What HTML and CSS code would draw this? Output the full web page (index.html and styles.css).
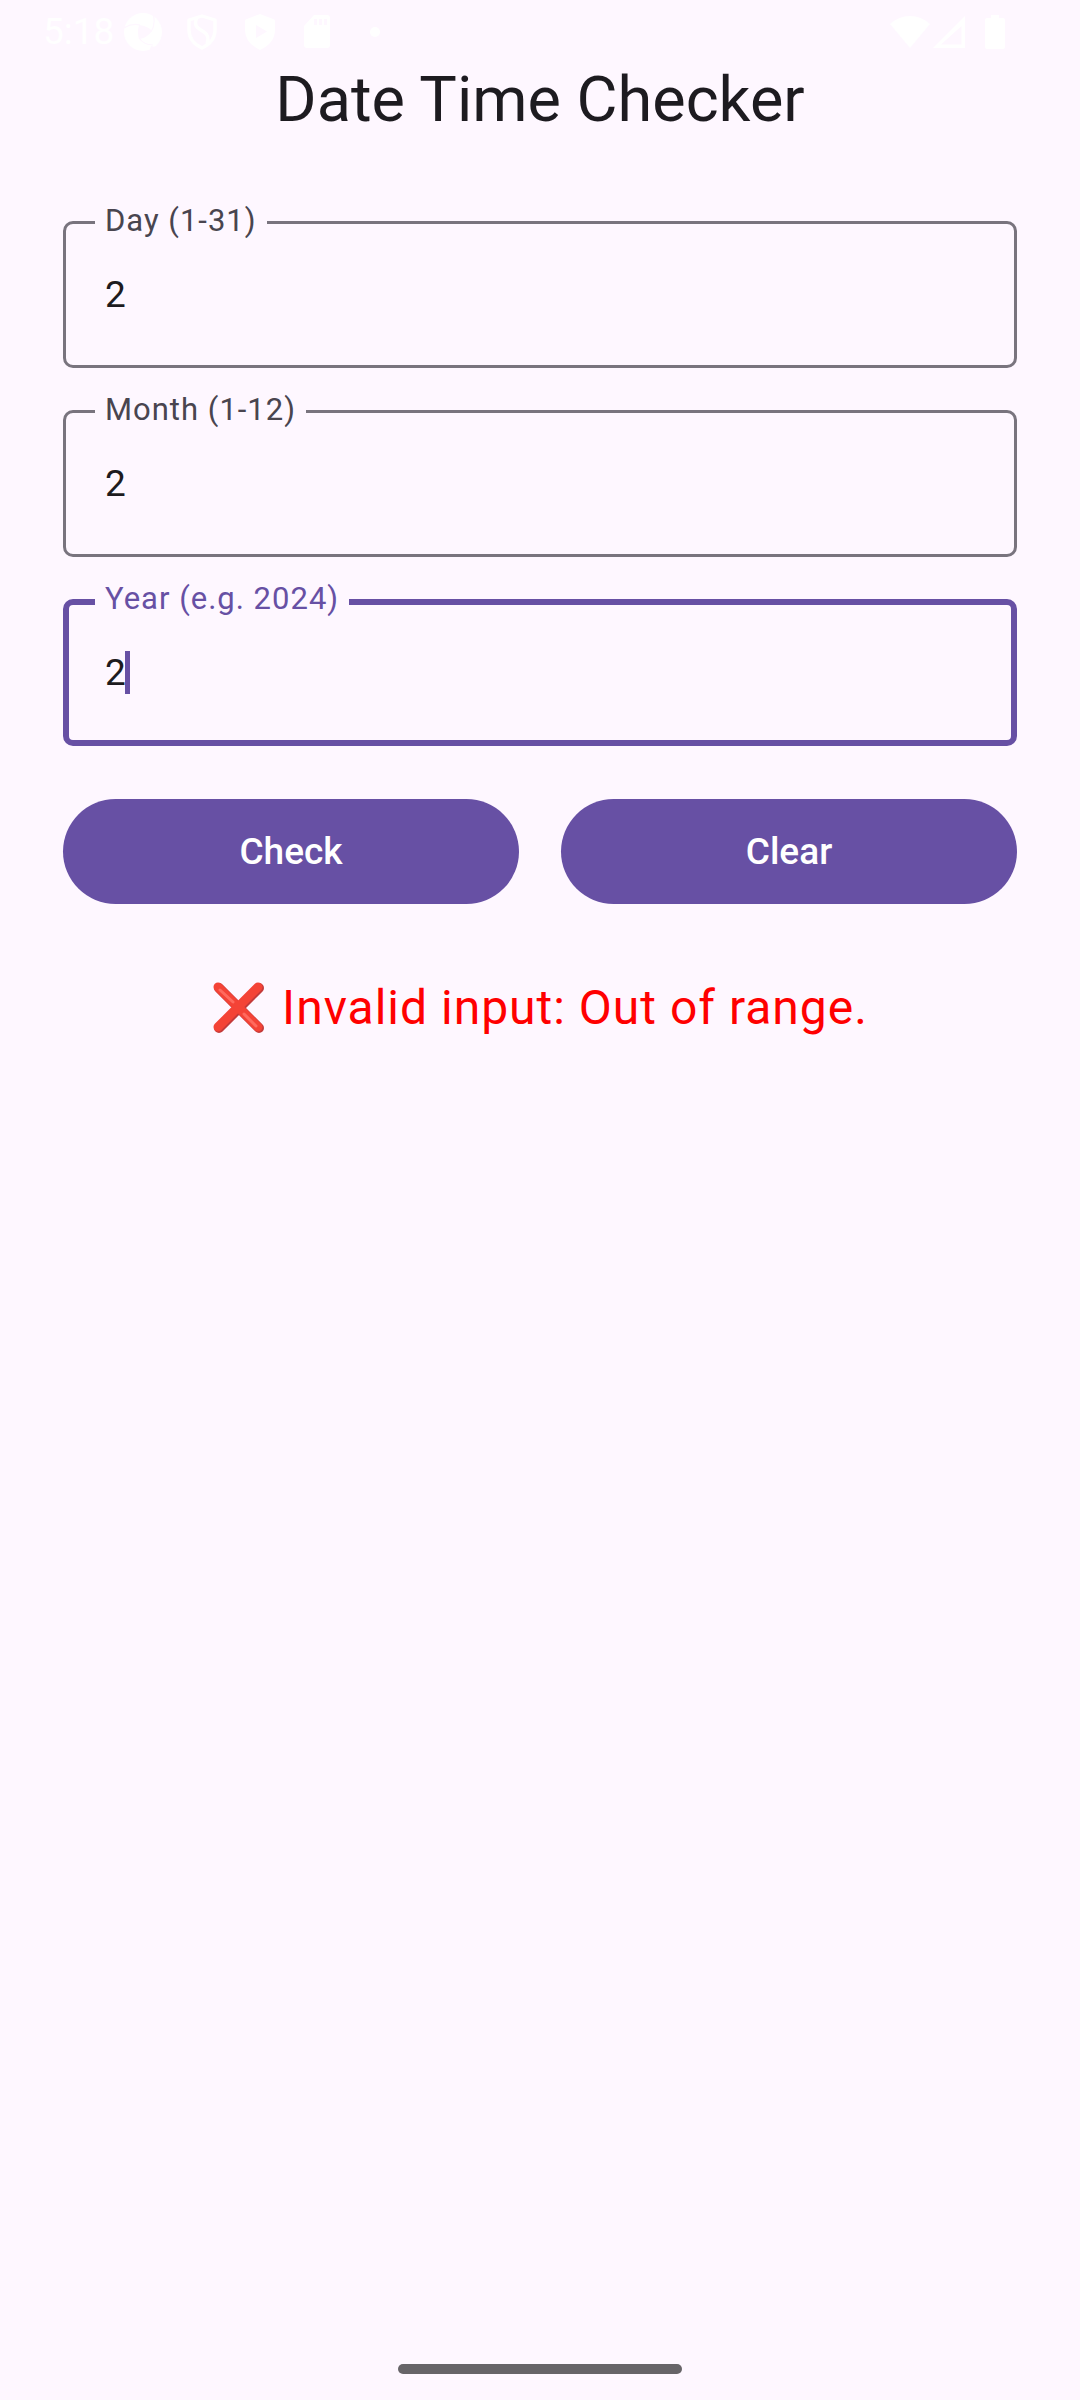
FILE: index.html
```html
<!DOCTYPE html>
<html lang="en">
<head>
  <meta charset="utf-8">
  <meta name="viewport" content="width=device-width, initial-scale=1">
  <title>Date Time Checker</title>
  <link rel="stylesheet" href="styles.css">
</head>
<body>
  <div class="screen">
    <header class="status-bar">
      <div class="status-group">
        <span class="clock">5:18</span>
        <svg class="icon" width="39" height="40" viewBox="0 0 39 40" aria-hidden="true">
          <circle cx="19" cy="20" r="19" fill="#fff"/>
          <path d="M15 13Q24 14 28 19Q23 26 15 27Q13 20 15 13Z" fill="#fef7ff"/>
          <path d="M0 16Q8 11 16 13M29 2Q32 12 27 20M29 33Q20 33 15 26" fill="none" stroke="#fef7ff" stroke-width="1.2"/>
          <path d="M30 0L31 5L39 8V0ZM27 34L25 40H33L38 32Q32 36 27 34Z" fill="#fef7ff"/>
        </svg>
        <svg class="icon shield" width="30" height="36" viewBox="0 0 30 36" aria-hidden="true">
          <path d="M15 2L28 6V16Q28 28 15 34Q2 28 2 16V6Z" fill="none" stroke="#fff" stroke-width="3.4" stroke-linejoin="round"/>
          <path d="M10 4Q7 9 10 13Q12 15 17 18Q23 22 20 30" fill="none" stroke="#fff" stroke-width="3.4"/>
        </svg>
        <svg class="icon" width="30" height="36" viewBox="0 0 30 36" aria-hidden="true">
          <path fill-rule="evenodd" d="M15 0L28 5Q30 5 30 7V16Q30 29 15 36Q0 29 0 16V7Q0 5 2 5ZM11 11V24L22 17.500Z" fill="#fff"/>
        </svg>
        <svg class="icon sd-card" width="26" height="34" viewBox="0 0 26 34" aria-hidden="true">
          <path fill-rule="evenodd" d="M10 0H23Q26 0 26 3V30Q26 33 23 33H3Q0 33 0 30V11ZM10 4V10H13V4ZM15 4V10H18V4ZM20 4V10H23V4Z" fill="#fff"/>
        </svg>
        <svg class="icon dot" width="10" height="10" viewBox="0 0 10 10" aria-hidden="true">
          <circle cx="5" cy="5" r="5" fill="#fff"/>
        </svg>
      </div>
      <div class="status-group system">
        <svg class="icon" width="40" height="34" viewBox="0 0 40 34" aria-hidden="true">
          <path d="M0 9Q9 1 20 1Q31 1 40 9L20 33Z" fill="#fff"/>
        </svg>
        <svg class="icon" width="34" height="34" viewBox="0 0 34 34" aria-hidden="true">
          <path fill-rule="evenodd" d="M33 1V33H1ZM29.500 11L9 29.500H29.500Z" fill="#fff"/>
        </svg>
        <svg class="icon battery" width="20" height="34" viewBox="0 0 20 34" aria-hidden="true">
          <path d="M6 0H14V3H18Q20 3 20 5V32Q20 34 18 34H2Q0 34 0 32V5Q0 3 2 3H6Z" fill="#fff"/>
        </svg>
      </div>
    </header>

    <main class="content">
      <h1 class="title">Date Time Checker</h1>

      <form class="form">
        <div class="field">
          <label class="field-label" for="day">Day (1-31)</label>
          <input class="field-input" id="day" type="text" inputmode="numeric" value="2">
        </div>
        <div class="field">
          <label class="field-label" for="month">Month (1-12)</label>
          <input class="field-input" id="month" type="text" inputmode="numeric" value="2">
        </div>
        <div class="field field-active">
          <label class="field-label" for="year">Year (e.g. 2024)</label>
          <input class="field-input" id="year" type="text" inputmode="numeric" value="2">
          <span class="caret"></span>
        </div>

        <div class="actions">
          <button class="button" type="button">Check</button>
          <button class="button" type="reset">Clear</button>
        </div>
      </form>

      <p class="result" role="status">
        <svg class="cross" width="54" height="54" viewBox="0 0 54 54" role="img" aria-label="Error">
          <path d="M7 7L47 47M47 7L7 47" fill="none" stroke="#c33a3a" stroke-width="10" stroke-linecap="round"/>
          <path d="M6 6L46 46M46 6L6 46" fill="none" stroke="#f44336" stroke-width="9" stroke-linecap="round"/>
          <path d="M8 9L21 21M32 33L44 45" fill="none" stroke="#ff6a5e" stroke-width="3" stroke-linecap="round"/>
        </svg>
        <span>Invalid input: Out of range.</span>
      </p>
    </main>

    <footer class="nav-bar"><span class="nav-handle"></span></footer>
  </div>
</body>
</html>
```

FILE: styles.css
```css
:root {
  --surface: #fef7ff;
  --on-surface: #1d1b20;
  --on-surface-variant: #49454f;
  --outline: #79747e;
  --primary: #6750a4;
}

* {
  box-sizing: border-box;
}

body {
  margin: 0;
  background: var(--surface);
  color: var(--on-surface);
  font-family: Roboto, "Noto Sans", sans-serif;
}

.screen {
  display: flex;
  flex-direction: column;
  min-height: 100vh;
}

.status-bar {
  display: flex;
  justify-content: space-between;
  height: 58px;
  padding: 6px 75px 0 43px;
  color: #fff;
}

.status-group {
  display: flex;
  align-items: center;
  height: 51px;
}

.clock {
  margin-right: 10px;
  font-size: 37px;
  line-height: 50px;
}

.icon {
  display: block;
  flex: none;
}

.shield {
  margin-left: 24px;
  margin-right: 28px;
}

.sd-card {
  margin-left: 29px;
}

.dot {
  margin-left: 40px;
}

.system {
  gap: 2px;
}

.battery {
  margin-left: 17px;
}

.content {
  flex: 1;
  padding: 0 63px;
}

.title {
  margin: 0 0 79px;
  font-size: 63px;
  font-weight: 400;
  line-height: 84px;
  text-align: center;
}

.form {
  display: flex;
  flex-direction: column;
  gap: 42px;
}

.field {
  position: relative;
}

.field-label {
  position: absolute;
  top: -20px;
  left: 32px;
  padding: 0 10px;
  background: var(--surface);
  color: var(--on-surface-variant);
  font-size: 31px;
  line-height: 40px;
  letter-spacing: 1px;
}

.field-input {
  display: block;
  width: 100%;
  height: 147px;
  padding: 0 39px;
  border: 3px solid var(--outline);
  border-radius: 10px;
  outline: none;
  background: transparent;
  color: var(--on-surface);
  font-family: inherit;
  font-size: 37px;
}

.field-active .field-input {
  padding: 0 36px;
  border: 6px solid var(--primary);
}

.field-active .field-label {
  color: var(--primary);
}

.caret {
  position: absolute;
  top: 52px;
  left: 62px;
  width: 5px;
  height: 43px;
  background: var(--primary);
}

.actions {
  display: grid;
  grid-template-columns: 1fr 1fr;
  gap: 42px;
  margin-top: 11px;
}

.button {
  height: 105px;
  padding: 0 24px;
  border: 0;
  border-radius: 53px;
  background: var(--primary);
  color: #fff;
  font-family: inherit;
  font-size: 37px;
  font-weight: 500;
}

.result {
  display: flex;
  align-items: center;
  justify-content: center;
  gap: 16px;
  margin: 72px 0 0;
  color: #f00;
  font-size: 48px;
  line-height: 63px;
  letter-spacing: 1px;
}

.cross {
  flex: none;
}

.nav-bar {
  display: flex;
  justify-content: center;
  padding-bottom: 26px;
}

.nav-handle {
  width: 284px;
  height: 10px;
  border-radius: 5px;
  background: #676468;
}
```
